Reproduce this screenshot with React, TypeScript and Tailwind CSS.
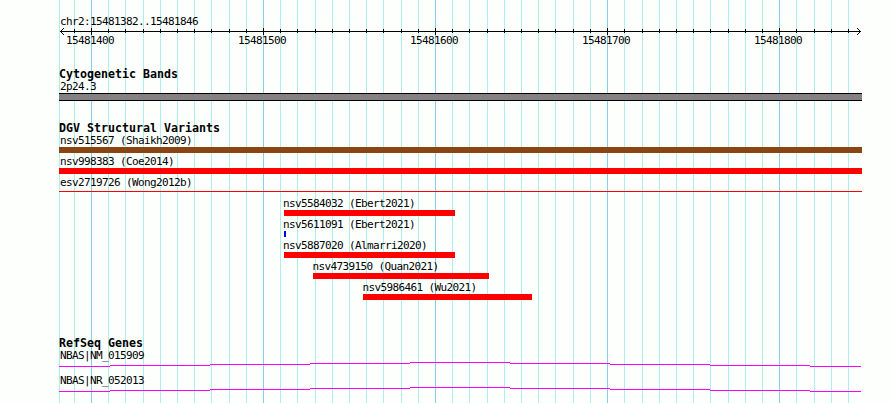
const minorLines = [
  59, 74, 108, 125, 143, 160, 177, 194, 211, 229, 246, 280, 297, 315, 332, 349,
  366, 383, 401, 418, 452, 469, 487, 504, 521, 538, 555, 573, 590, 624, 642,
  659, 676, 693, 710, 728, 745, 762, 796, 814, 831, 848,
];

const majorLines = [91, 263, 435, 607, 779];

const axisLabels = ["15481400", "15481500", "15481600", "15481700", "15481800"];

const variants = [
  { label: "nsv515567 (Shaikh2009)", row: "pl-[59px]", text: "pl-px", bar: "w-[803px] h-1.5 bg-[#8b4513]" },
  { label: "nsv998383 (Coe2014)", row: "pl-[59px]", text: "pl-px", bar: "w-[803px] h-1.5 bg-[#ff0000]" },
  { label: "esv2719726 (Wong2012b)", row: "pl-[59px]", text: "pl-px", bar: "w-[803px] h-px mt-[2px] bg-[#ff0000]" },
  { label: "nsv5584032 (Ebert2021)", row: "pl-[284px]", text: "-ml-px", bar: "w-[171px] h-1.5 bg-[#ff0000]" },
  { label: "nsv5611091 (Ebert2021)", row: "pl-[284px]", text: "-ml-px", bar: "w-[2px] h-1.5 bg-[#0000ff]" },
  { label: "nsv5887020 (Almarri2020)", row: "pl-[284px]", text: "-ml-px", bar: "w-[171px] h-1.5 bg-[#ff0000]" },
  { label: "nsv4739150 (Quan2021)", row: "pl-[313px]", text: "-ml-[0.5px]", bar: "w-[176px] h-1.5 bg-[#ff0000]" },
  { label: "nsv5986461 (Wu2021)", row: "pl-[363px]", text: "-ml-[0.5px]", bar: "w-[169px] h-1.5 bg-[#ff0000]" },
];

const genes = ["NBAS|NM_015909", "NBAS|NR_052013"];

// [start, end, y] of each intron step
const geneSteps = [
  [0, 51, 4],
  [51, 151, 3],
  [151, 251, 2],
  [251, 351, 1],
  [351, 451, 0],
  [451, 551, 1],
  [551, 651, 2],
  [651, 751, 3],
  [751, 802, 4],
];

function GridLines() {
  return (
    <svg className="absolute inset-0" width="890" height="403" shapeRendering="crispEdges">
      {minorLines.map((x) => (
        <rect key={x} x={x} y="0" width="1" height="403" fill="#afeeee" />
      ))}
      {majorLines.map((x) => (
        <rect key={x} x={x} y="0" width="1" height="403" fill="#87ceeb" />
      ))}
    </svg>
  );
}

function Ruler() {
  return (
    <svg className="block" width="890" height="9" shapeRendering="crispEdges">
      <rect x="60" y="4" width="801" height="1" />
      {minorLines.slice(1).map((x) => (
        <rect key={x} x={x} y="2" width="1" height="4" />
      ))}
      {majorLines.map((x) => (
        <rect key={x} x={x} y="1" width="1" height="7" />
      ))}
      {[1, 2, 3].map((d) => (
        <g key={d}>
          <rect x={60 + d} y={4 - d} width="1" height="1" />
          <rect x={60 + d} y={4 + d} width="1" height="1" />
          <rect x={860 - d} y={4 - d} width="1" height="1" />
          <rect x={860 - d} y={4 + d} width="1" height="1" />
        </g>
      ))}
    </svg>
  );
}

function Heading({ children }: { children: React.ReactNode }) {
  return (
    <h2 className="h-3 pl-[59px] text-[11.63px] leading-3 font-bold tracking-normal">{children}</h2>
  );
}

export default function App() {
  return (
    <div className="relative w-[890px] h-[403px] overflow-hidden bg-[#fdfffd] text-black font-['DejaVu_Sans_Mono',monospace] text-[11px] tracking-[-0.622px] leading-[14px] whitespace-pre">
      <GridLines />
      <main className="relative flex flex-col pt-[15px]">
        <div className="h-3 pl-[60px]">chr2:15481382..15481846</div>
        <Ruler />
        <div className="flex h-3 gap-[124px] pl-[66px] -mt-px leading-3">
          {axisLabels.map((label) => (
            <span key={label} className="w-12">{label}</span>
          ))}
        </div>

        <section className="mt-[21px]">
          <Heading>Cytogenetic Bands</Heading>
          <div className="h-3 pl-[60px]">2p24.3</div>
          <div className="mt-px ml-[59px] w-[803px] h-2 border-y border-black bg-[#848084]" />
        </section>

        <section className="mt-[21px]">
          <Heading>DGV Structural Variants</Heading>
          {variants.map((v) => (
            <div key={v.label} className={`h-[21px] ${v.row}`}>
              <div className={`h-[13px] ${v.text}`}>{v.label}</div>
              <div className={v.bar} />
            </div>
          ))}
        </section>

        <section className="mt-[35px]">
          <Heading>RefSeq Genes</Heading>
          {genes.map((gene) => (
            <div key={gene} className="h-[25px]">
              <div className="h-[13px] pl-[60px]">{gene}</div>
              <svg className="block ml-[59px]" width="802" height="5" shapeRendering="crispEdges">
                {geneSteps.map(([start, end, y]) => (
                  <rect key={start} x={start} y={y} width={end - start} height="1" fill="#ff00ff" />
                ))}
              </svg>
            </div>
          ))}
        </section>
      </main>
    </div>
  );
}
